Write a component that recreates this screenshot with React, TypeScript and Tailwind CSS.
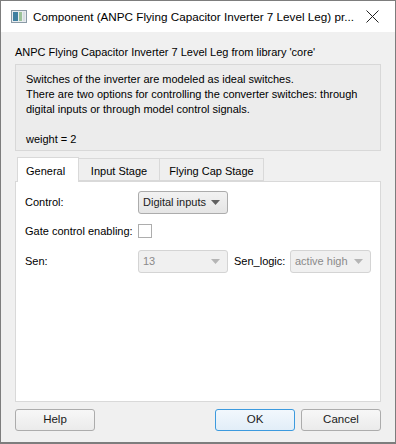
import React from "react";

const font = { fontFamily: '"Liberation Sans", Arial, sans-serif' };

function Arrow({ disabled }: { disabled?: boolean }) {
  return (
    <svg width="9" height="5" viewBox="0 0 9 5" className="ml-auto shrink-0">
      <path d="M0 0h9L4.5 5z" fill={disabled ? "#b5b5b5" : "#606060"} />
    </svg>
  );
}

function Combo({ value, width, disabled }: { value: string; width: string; disabled?: boolean }) {
  return (
    <div
      className={`flex items-center h-[23px] ${width} rounded-[3px] border pl-[4px] pr-[7px] whitespace-nowrap ${
        disabled ? "border-[#d4d4d4] bg-[#f0f0f0] text-[#8a8a8a]" : "border-[#acacac] bg-gradient-to-b from-[#f2f2f2] to-[#e5e5e5] text-[#1a1a1a]"
      }`}
    >
      <span>{value}</span>
      <Arrow disabled={disabled} />
    </div>
  );
}

function Btn({ label, focus }: { label: string; focus?: boolean }) {
  return (
    <button
      className={`w-[80px] h-[22px] rounded-[3px] border text-[11.5px] text-[#1a1a1a] ${
        focus ? "border-[#3c9ade] bg-gradient-to-b from-[#f2f8fd] to-[#e2eef8]" : "border-[#acacac] bg-gradient-to-b from-[#f7f7f7] to-[#ebebeb]"
      }`}
    >
      {label}
    </button>
  );
}

export default function App() {
  return (
    <div className="w-[396px] h-[444px] bg-white" style={font}>
      <div className="flex flex-col w-full h-full border border-[#7d7d7d] border-b-2 text-[11px] text-[#000] whitespace-nowrap">
        <div className="flex items-center h-[31px] bg-white pl-[10px] pr-[16px]">
          <svg width="16" height="13" viewBox="0 0 16 13">
            <rect x="0.5" y="0.5" width="15" height="12" fill="#e8ecef" stroke="#8a9aa6" />
            <rect x="2" y="2" width="5" height="9" fill="#3f7fa0" />
            <rect x="8" y="2" width="3" height="9" fill="#9cc39a" />
            <rect x="12" y="2" width="2" height="9" fill="#d7dde2" />
          </svg>
          <span className="ml-[6px] text-[11.7px] text-black">Component (ANPC Flying Capacitor Inverter 7 Level Leg) pr...</span>
          <svg width="13" height="13" viewBox="0 0 13 13" className="ml-auto">
            <path d="M0.5 0.5L12.5 12.5M12.5 0.5L0.5 12.5" stroke="#222" strokeWidth="1" />
          </svg>
        </div>
        <div className="flex flex-col flex-1 bg-[#f0f0f0] px-[14px] pt-[12px] pb-[11px]">
          <div className="h-[16px] leading-[16px]">ANPC Flying Capacitor Inverter 7 Level Leg from library 'core'</div>
          <div className="mt-[4px] h-[87px] border border-[#d8d8d8] bg-[#ececec] px-[10px] pt-[7px] leading-[15px]">
            <div>Switches of the inverter are modeled as ideal switches.</div>
            <div>There are two options for controlling the converter switches: through</div>
            <div>digital inputs or through model control signals.</div>
            <div className="h-[15px]" />
            <div>weight = 2</div>
          </div>
          <div className="mt-[5px] flex flex-col flex-1">
            <div className="flex items-end h-[25px] pl-[2px]">
              <div className="relative z-10 h-[25px] w-[62px] -mb-px border border-b-0 border-[#d9d9d9] bg-white pl-[8px] pt-[5px]">General</div>
              <div className="h-[23px] w-[81px] border border-l-0 border-[#d9d9d9] bg-[#efefef] text-center pt-[4px]">Input Stage</div>
              <div className="h-[23px] w-[104px] border border-l-0 border-[#d9d9d9] bg-[#efefef] text-center pt-[4px]">Flying Cap Stage</div>
            </div>
            <div className="flex-1 border border-[#d9d9d9] bg-white px-[9px] pt-[9px]">
              <div className="flex items-center h-[23px]">
                <span className="w-[113px]">Control:</span>
                <Combo value="Digital inputs" width="w-[90px]" />
              </div>
              <div className="flex items-center h-[14px] mt-[10px]">
                <span className="w-[113px]">Gate control enabling:</span>
                <div className="w-[14px] h-[14px] border border-[#adadad] bg-white" />
              </div>
              <div className="flex items-center h-[23px] mt-[12px]">
                <span className="w-[113px]">Sen:</span>
                <Combo value="13" width="w-[90px]" disabled />
                <span className="ml-[6px] w-[56px]">Sen_logic:</span>
                <Combo value="active high" width="w-[81px]" disabled />
              </div>
            </div>
          </div>
          <div className="flex mt-[7px] gap-[6px]">
            <Btn label="Help" />
            <div className="flex-1" />
            <Btn label="OK" focus />
            <Btn label="Cancel" />
          </div>
        </div>
      </div>
    </div>
  );
}
